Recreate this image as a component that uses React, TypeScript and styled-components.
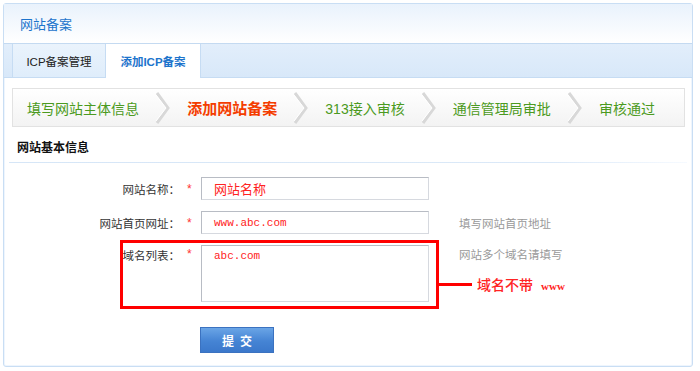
import React from 'react'
import styled, { createGlobalStyle } from 'styled-components'

const GlobalStyle = createGlobalStyle`
  body {
    margin: 0;
    background: #fff;
    font-family: "Liberation Sans", "Noto Sans CJK SC", sans-serif;
    font-size: 12px;
    color: #333;
  }
`

const Panel = styled.div`
  margin: 3px;
  width: 690px;
  height: 364px;
  box-sizing: border-box;
  border: 1px solid #c9def4;
  border-radius: 3px;
  box-shadow: inset 0 0 0 1px #eef5fd;
  display: flex;
  flex-direction: column;
`

const Header = styled.div`
  height: 39px;
  display: flex;
  align-items: center;
  padding-left: 16px;
  background: linear-gradient(#e9f2fc, #ffffff);
  color: #1d74cc;
  font-size: 13px;
  border-bottom: 1px solid #c4daf1;
`

const TabBar = styled.div`
  height: 33px;
  display: flex;
  align-items: stretch;
  padding-left: 8px;
  background: linear-gradient(#e2eefb, #d8e8f9);
  border-bottom: 1px solid #c6dcf3;
`

const Tab = styled.div<{ $active?: boolean }>`
  width: ${(p) => (p.$active ? '94px' : '92px')};
  display: flex;
  align-items: center;
  justify-content: center;
  border-left: 1px solid #c6dcf3;
  border-right: ${(p) => (p.$active ? '1px solid #c6dcf3' : 'none')};
  background: ${(p) => (p.$active ? '#fff' : 'linear-gradient(#eaf3fc, #dfedfb)')};
  color: ${(p) => (p.$active ? '#1d74cc' : '#222')};
  font-weight: ${(p) => (p.$active ? 'bold' : 'normal')};
  font-size: 11.5px;
  margin-bottom: ${(p) => (p.$active ? '-1px' : '0')};
`

const Steps = styled.div`
  margin: 10px 7px 0 8px;
  height: 37px;
  border: 1px solid #e2e2e2;
  background: linear-gradient(#ffffff, #f3f3f3);
  display: flex;
  align-items: center;
  justify-content: space-between;
  padding: 0 29px 0 14px;
`

const Step = styled.span<{ $active?: boolean }>`
  font-size: ${(p) => (p.$active ? '15px' : '14px')};
  font-weight: ${(p) => (p.$active ? 'bold' : 'normal')};
  color: ${(p) => (p.$active ? '#f43d00' : '#4b9a20')};
  white-space: nowrap;
`

const SectionTitle = styled.div`
  margin: 13px 5px 0 5px;
  padding: 0 0 7px 8px;
  font-weight: bold;
  font-size: 12px;
  line-height: 16px;
  color: #111;
  position: relative;
  &::after {
    content: '';
    position: absolute;
    left: 0;
    right: 0;
    bottom: 0;
    height: 1px;
    background: linear-gradient(90deg, #d6e6f7, #dbe9f8 80%, #f6faff);
  }
`

const Form = styled.div`
  display: flex;
  flex-direction: column;
  gap: 11px;
  margin-top: 14px;
`

const Row = styled.div`
  display: grid;
  grid-template-columns: 176px 21px 228px auto;
  align-items: center;
  position: relative;
`

const Label = styled.div<{ $top?: boolean }>`
  text-align: right;
  color: #333;
  font-size: 11.5px;
  font-family: "Noto Sans CJK SC", sans-serif;
  align-self: ${(p) => (p.$top ? 'start' : 'center')};
  padding-top: ${(p) => (p.$top ? '2px' : '0')};
`

const Star = styled.span<{ $top?: boolean }>`
  color: #f33;
  padding-left: 7px;
  align-self: ${(p) => (p.$top ? 'start' : 'center')};
  padding-top: ${(p) => (p.$top ? '2px' : '0')};
`

const Field = styled.div<{ $tall?: boolean; $mono?: boolean }>`
  height: ${(p) => (p.$tall ? '57px' : '23px')};
  box-sizing: border-box;
  border: 1px solid #d6d9df;
  border-top-color: #b8bcc4;
  border-left-color: #b8bcc4;
  padding: ${(p) => (p.$tall ? '4px 12px' : '0 12px')};
  display: flex;
  align-items: ${(p) => (p.$tall ? 'flex-start' : 'center')};
  color: #f22;
  font-size: ${(p) => (p.$mono ? '11px' : '13px')};
  font-family: ${(p) =>
    p.$mono ? '"Liberation Mono", monospace' : '"Noto Sans CJK SC", sans-serif'};
`

const Hint = styled.div<{ $top?: boolean }>`
  margin-left: 30px;
  color: #999;
  font-size: 11.5px;
  font-family: "Noto Sans CJK SC", sans-serif;
  align-self: ${(p) => (p.$top ? 'start' : 'center')};
  padding-top: ${(p) => (p.$top ? '1px' : '0')};
`

// red annotation drawn over the domain-list row
const Highlight = styled.div`
  position: absolute;
  left: 116px;
  top: -5px;
  width: 319px;
  height: 69px;
  box-sizing: border-box;
  border: 3px solid #ff0000;
  pointer-events: none;
`

const Callout = styled.div`
  position: absolute;
  left: 435px;
  top: 29px;
  display: flex;
  align-items: center;
  gap: 5px;
  &::before {
    content: '';
    width: 33px;
    height: 3px;
    background: #ff0000;
  }
`

const CalloutText = styled.span`
  color: #ff2424;
  font-size: 14px;
  font-weight: 500;
  font-family: "Noto Sans CJK SC", sans-serif;
  & > small {
    font-family: "Liberation Serif", serif;
    font-size: 11px;
    font-weight: bold;
    margin-left: 8px;
  }
`

const Actions = styled.div`
  margin-top: 25px;
  padding-left: 196px;
`

const Button = styled.button`
  width: 74px;
  height: 26px;
  border: 1px solid #3b72c0;
  background: linear-gradient(#6aa5e6, #4584d4 55%, #3b78cb);
  color: #fff;
  font-weight: bold;
  font-size: 12px;
  font-family: "Noto Sans CJK SC", sans-serif;
  letter-spacing: 6px;
  text-indent: 6px;
  cursor: pointer;
`

const Chevron = () => (
  <svg width="14" height="32" viewBox="0 0 14 32">
    <polyline points="1,1 12,16 1,31" fill="none" stroke="#d8d8d8" strokeWidth="3" />
    <polyline points="0,3 10,16 0,29" fill="none" stroke="#ffffff" strokeWidth="1" />
  </svg>
)

const steps = ['填写网站主体信息', '添加网站备案', '313接入审核', '通信管理局审批', '审核通过']

export default function App() {
  return (
    <>
      <GlobalStyle />
      <Panel>
        <Header>网站备案</Header>
        <TabBar>
          <Tab>ICP备案管理</Tab>
          <Tab $active>添加ICP备案</Tab>
        </TabBar>
        <Steps>
          {steps.map((s, i) => (
            <React.Fragment key={s}>
              {i > 0 && <Chevron />}
              <Step $active={i === 1}>{s}</Step>
            </React.Fragment>
          ))}
        </Steps>
        <SectionTitle>网站基本信息</SectionTitle>
        <Form>
          <Row>
            <Label>网站名称：</Label>
            <Star>*</Star>
            <Field>网站名称</Field>
          </Row>
          <Row>
            <Label>网站首页网址：</Label>
            <Star>*</Star>
            <Field $mono>www.abc.com</Field>
            <Hint>填写网站首页地址</Hint>
          </Row>
          <Row>
            <Label $top>域名列表：</Label>
            <Star $top>*</Star>
            <Field $tall $mono>abc.com</Field>
            <Hint $top>网站多个域名请填写</Hint>
            <Highlight />
            <Callout>
              <CalloutText>
                域名不带<small>www</small>
              </CalloutText>
            </Callout>
          </Row>
        </Form>
        <Actions>
          <Button>提交</Button>
        </Actions>
      </Panel>
    </>
  )
}
